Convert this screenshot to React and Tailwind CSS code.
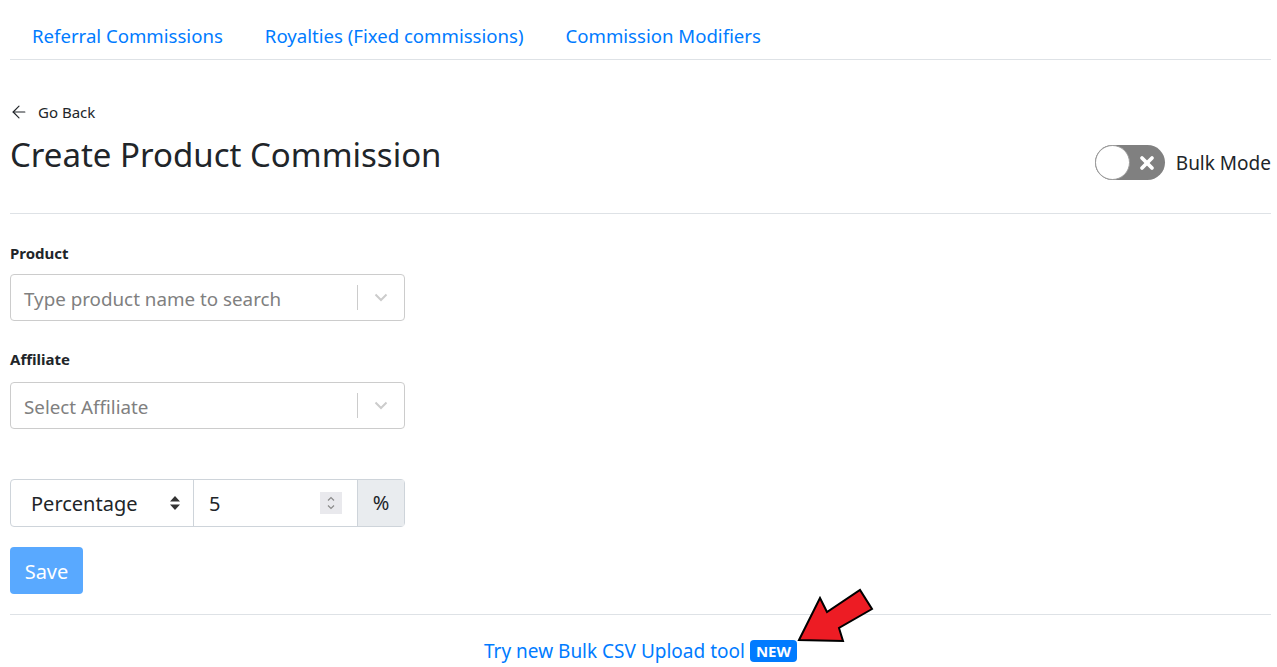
import { ArrowLeft, X } from "lucide-react";

const tabs = ["Referral Commissions", "Royalties (Fixed commissions)", "Commission Modifiers"];

function Chevron() {
  return (
    <svg width="14" height="9" viewBox="0 0 14 9" className="text-[#cccccc]">
      <path d="M1.5 1.5 L7 7 L12.5 1.5" fill="none" stroke="currentColor" strokeWidth="2" />
    </svg>
  );
}

function SearchSelect({ placeholder }) {
  return (
    <div className="flex h-[47px] w-[395px] items-center rounded border border-[#cccccc] bg-white">
      <div className="flex-1 pl-[13px] pt-[4px] text-[18.8px] text-[#808080]">{placeholder}</div>
      <div className="h-[25px] w-px bg-[#cccccc]" />
      <div className="flex w-[46px] justify-center">
        <Chevron />
      </div>
    </div>
  );
}

export default function App() {
  return (
    <div className="min-h-screen bg-white pl-[10px] pr-[6px] text-[#212529] font-['Noto_Sans',sans-serif] relative">
      {/* TABS */}
      <nav className="flex border-b border-[#dee2e6] pt-[21px] pb-[8px] pl-px">
        {tabs.map((t) => (
          <a key={t} className="px-[21px] text-[18.6px] leading-[30px] text-[#007bff]">
            {t}
          </a>
        ))}
      </nav>

      {/* HEADER */}
      <div className="mt-[40px] flex items-center gap-[9px] text-[15px] leading-[24px]">
        <ArrowLeft className="h-[20px] w-[20px] -ml-px" strokeWidth={1.4} />
        <span>Go Back</span>
      </div>
      <div className="mt-[10px] flex items-start justify-between border-b border-[#dee2e6] pb-[33px]">
        <h2 className="text-[33px] leading-[42px]">Create Product Commission</h2>
        <div className="mt-[11px] flex items-center gap-[11px]">
          <div className="flex h-[35px] w-[70px] items-center rounded-full bg-[#808080]">
            <div className="h-[35px] w-[35px] rounded-full border border-[#9a9a9a] bg-white" />
            <div className="flex flex-1 justify-center">
              <X className="h-[20px] w-[20px] text-white" strokeWidth={4.5} />
            </div>
          </div>
          <span className="text-[19px] leading-[30px]">Bulk Mode</span>
        </div>
      </div>

      {/* FORM */}
      <div className="mt-[28px] text-[15px] font-bold leading-[22px]">Product</div>
      <div className="mt-[10px]">
        <SearchSelect placeholder="Type product name to search" />
      </div>
      <div className="mt-[27px] text-[15px] font-bold leading-[22px]">Affiliate</div>
      <div className="mt-[12px]">
        <SearchSelect placeholder="Select Affiliate" />
      </div>

      <div className="mt-[50px] flex h-[48px] w-[395px] rounded border border-[#ced4da] text-[20px]">
        <div className="flex w-[183px] items-center justify-between border-r border-[#ced4da] pl-[20px] pr-[13px]">
          <span className="pt-px">Percentage</span>
          <svg width="10" height="14" viewBox="0 0 10 14" className="text-[#333]">
            <path d="M5 0 L10 5.5 L0 5.5 Z M5 14 L10 8.5 L0 8.5 Z" fill="currentColor" />
          </svg>
        </div>
        <div className="flex flex-1 items-center justify-between pl-[15px] pr-[15px]">
          <span className="pt-px">5</span>
          <div className="flex h-[22px] w-[22px] flex-col items-center justify-center bg-[#e9e9ed]">
            <svg width="10" height="16" viewBox="0 0 10 16" className="text-[#8a8a8a]">
              <path d="M2 5.5 L5 2.5 L8 5.5 M2 10.5 L5 13.5 L8 10.5" fill="none" stroke="currentColor" strokeWidth="1.2" />
            </svg>
          </div>
        </div>
        <div className="flex w-[47px] items-center justify-center border-l border-[#ced4da] bg-[#e9ecef]">%</div>
      </div>

      <button className="mt-[20px] h-[47px] w-[73px] rounded bg-[#59a9ff] pt-[2px] text-[20px] text-white">Save</button>

      {/* FOOTER */}
      <div className="mt-[20px] flex items-center justify-center gap-[5px] border-t border-[#dee2e6] pt-[21px]">
        <span className="text-[19px] leading-[30px] text-[#007bff]">Try new Bulk CSV Upload tool</span>
        <span className="rounded-[4px] bg-[#007bff] px-[6px] text-[15px] font-bold leading-[22px] text-white">NEW</span>
      </div>

      {/* ANNOTATION ARROW */}
      <svg className="absolute left-[795px] top-[586px]" width="82" height="60" viewBox="795 586 82 60">
        <polygon
          points="799,640 820,598 827,612 860,590 872,609 839,628 843,641"
          fill="#ed1c24"
          stroke="#000"
          strokeWidth="2"
          strokeLinejoin="miter"
        />
      </svg>
    </div>
  );
}
